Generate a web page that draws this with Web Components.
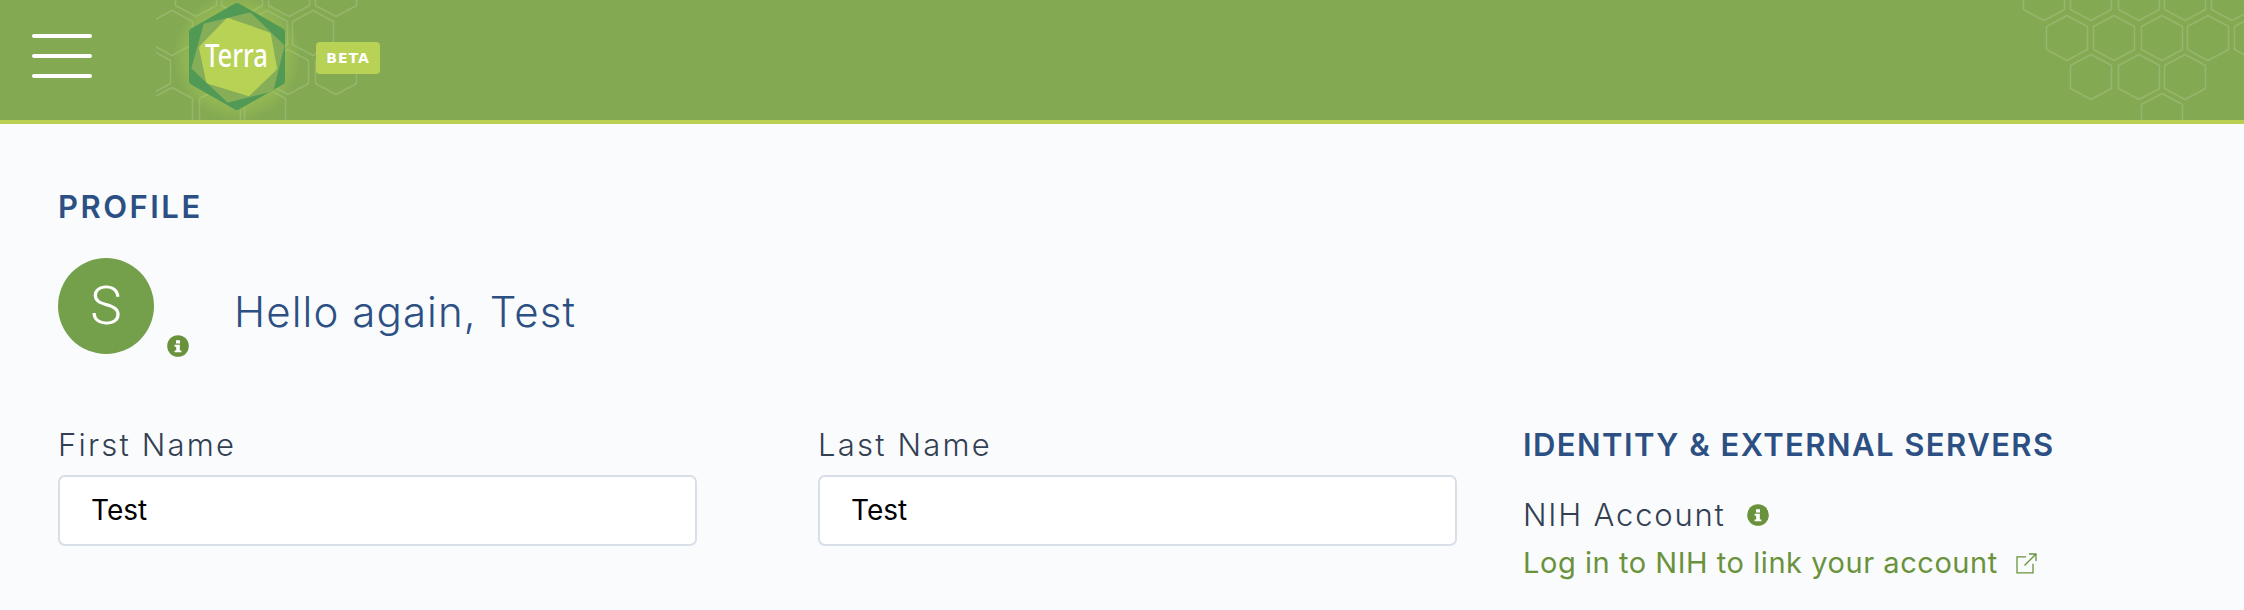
<!DOCTYPE html>
<html lang="en">
<head>
<meta charset="utf-8">
<title>Profile</title>
<style>
  html, body { margin: 0; padding: 0; background: #fafbfd; }
  body { width: 2244px; height: 610px; overflow: hidden; font-family: Inter, "Noto Sans", sans-serif; }
</style>
</head>
<body>
<terra-header></terra-header>
<profile-page>
  <section-title style="--track: 2.5px">PROFILE</section-title>
  <profile-hello slot="hello" initial="S">Hello again, Test</profile-hello>
  <text-field slot="first" label="First Name">Test</text-field>
  <text-field slot="last" label="Last Name">Test</text-field>
  <identity-panel slot="identity"></identity-panel>
</profile-page>

<script>
// petits hexagones du fond, [x, y] = centre
const HEX_CELLS = [
  [196,-6],[242,-6],[289,-6],[336,-6],[172,33],[267,33],[313,33],[150,72],[288,72],[336,72],[172,110],[220,110],[265,110],
  [2044,-2],[2091,-2],[2139,-2],[2185,-2],[2232,-2],[2067,38],[2114,38],[2162,38],[2208,38],[2255,38],
  [2091,77],[2139,77],[2185,77],[2162,116]
];

class HexField extends HTMLElement {
  constructor() {
    super();
    this.attachShadow({ mode: "open" });
  }
  connectedCallback() {
    const cells = HEX_CELLS.map(([x, y]) =>
      `<polygon points="${x},${y - 22.5} ${x + 20.5},${y - 11.5} ${x + 20.5},${y + 11.5} ${x},${y + 22.5} ${x - 20.5},${y + 11.5} ${x - 20.5},${y - 11.5}"/>`
    ).join("");
    this.shadowRoot.innerHTML = `
      <style>
        :host { position: absolute; inset: 0; display: block; pointer-events: none; }
        svg { display: block; }
        g { fill: none; stroke: #fff; stroke-opacity: .15; stroke-width: 1.5; stroke-linejoin: round; }
      </style>
      <svg width="2244" height="120" viewBox="0 0 2244 120">
        <defs>
          <radialGradient id="glow">
            <stop offset="0" stop-color="#b7d255" stop-opacity=".5"/>
            <stop offset=".75" stop-color="#b7d255" stop-opacity=".32"/>
            <stop offset="1" stop-color="#b7d255" stop-opacity="0"/>
          </radialGradient>
          <clipPath id="c"><rect x="156" y="0" width="2088" height="120"/></clipPath>
        </defs>
        <g clip-path="url(#c)">${cells}</g>
        <circle cx="237" cy="57" r="64" fill="url(#glow)"/>
      </svg>`;
  }
}
customElements.define("hex-field", HexField);

class TerraLogo extends HTMLElement {
  constructor() {
    super();
    this.attachShadow({ mode: "open" });
    this.shadowRoot.innerHTML = `
      <style>
        :host { display: block; width: 96px; height: 107px; }
        svg { display: block; overflow: visible; }
        text { font-family: "Noto Sans", sans-serif; font-size: 32px; font-weight: 500; fill: #fff; }
      </style>
      <svg width="96" height="107" viewBox="189 3 96 107">
        <polygon points="237,7 281,32 281,81 237,106 193,81 193,32" fill="#519a56" stroke="#519a56" stroke-width="8" stroke-linejoin="round"/>
        <polygon points="250,14 283,46 272,90 228,101 193,68 205,25" fill="#86ae58" stroke="#86ae58" stroke-width="3" stroke-linejoin="round"/>
        <polygon points="228,21 268,35 274,68 248,93 209,81 202,48" fill="#b7d255" stroke="#b7d255" stroke-width="6" stroke-linejoin="round"/>
        <text x="205" y="67" textLength="63" lengthAdjust="spacingAndGlyphs">Terra</text>
      </svg>`;
  }
}
customElements.define("terra-logo", TerraLogo);

class TerraHeader extends HTMLElement {
  constructor() {
    super();
    this.attachShadow({ mode: "open" });
    this.shadowRoot.innerHTML = `
      <style>
        :host { display: block; position: relative; height: 120px; background: #83aa53; border-bottom: 4px solid #b8d052; }
        .row { position: relative; display: flex; align-items: center; height: 120px; padding-left: 32px; }
        .burger { display: flex; flex-direction: column; gap: 16px; width: 60px; margin-top: -8px; }
        .burger i { display: block; height: 4px; background: #fff; border-radius: 2px; }
        terra-logo { margin-left: 97px; margin-top: -7px; }
        .beta {
          margin-left: 31px; margin-top: -4px; width: 64px; height: 32px; border-radius: 4px;
          background: #b7d255; color: #fff; font: 700 14px/32px "DejaVu Sans", sans-serif; letter-spacing: 1px; text-align: center;
        }
      </style>
      <hex-field></hex-field>
      <div class="row">
        <div class="burger"><i></i><i></i><i></i></div>
        <terra-logo></terra-logo>
        <div class="beta">BETA</div>
      </div>`;
  }
}
customElements.define("terra-header", TerraHeader);

class InfoIcon extends HTMLElement {
  constructor() {
    super();
    this.attachShadow({ mode: "open" });
    this.shadowRoot.innerHTML = `
      <style>
        :host { display: inline-block; width: 22px; height: 22px; }
        svg { display: block; }
      </style>
      <svg width="22" height="22" viewBox="0 0 22 22">
        <circle cx="11" cy="11" r="10.8" fill="#6a923d"/>
        <path d="M9 5.2h4v3.2H9z M7.6 9.8h5.2v5.6h1.6v1.9H7.6v-1.9h1.6v-3.7H7.6z" fill="#fff"/>
      </svg>`;
  }
}
customElements.define("info-icon", InfoIcon);

class SectionTitle extends HTMLElement {
  constructor() {
    super();
    this.attachShadow({ mode: "open" });
    this.shadowRoot.innerHTML = `
      <style>
        :host { display: block; color: #2c5083; font-family: Inter, "Noto Sans", sans-serif; font-weight: 600; font-size: 31px; line-height: 36px; white-space: nowrap; letter-spacing: var(--track, 1.45px); }
      </style>
      <slot></slot>`;
  }
}
customElements.define("section-title", SectionTitle);

class ProfileHello extends HTMLElement {
  constructor() {
    super();
    this.attachShadow({ mode: "open" });
  }
  connectedCallback() {
    const initial = this.getAttribute("initial") || "";
    this.shadowRoot.innerHTML = `
      <style>
        :host { display: flex; align-items: center; height: 96px; }
        .avatar {
          width: 96px; height: 96px; border-radius: 50%; background: #74a04b; color: #fff;
          display: flex; align-items: center; justify-content: center;
          font: 300 53px/1 Roboto, sans-serif; flex: none;
        }
        info-icon { align-self: flex-end; margin: 0 0 -3px 13px; flex: none; }
        .text { margin: 12px 0 0 45px; color: #2c5083; font: 300 42px/48px Inter, "Noto Sans", sans-serif; letter-spacing: 1.1px; white-space: nowrap; }
      </style>
      <div class="avatar">${initial}</div>
      <info-icon></info-icon>
      <div class="text"><slot></slot></div>`;
  }
}
customElements.define("profile-hello", ProfileHello);

class TextField extends HTMLElement {
  constructor() {
    super();
    this.attachShadow({ mode: "open" });
  }
  connectedCallback() {
    const label = this.getAttribute("label") || "";
    this.shadowRoot.innerHTML = `
      <style>
        :host { display: block; width: 639px; }
        .label { color: #333f52; font: 300 31px/36px Inter, "Noto Sans", sans-serif; letter-spacing: 2.2px; margin-bottom: 12px; }
        .box {
          box-sizing: border-box; height: 71px; padding: 0 31px; background: #fff;
          border: 2px solid #d8dfe9; border-radius: 7px; color: #000;
          font: 400 28px/67px Inter, "Noto Sans", sans-serif;
        }
      </style>
      <div class="label">${label}</div>
      <div class="box"><slot></slot></div>`;
  }
}
customElements.define("text-field", TextField);

class IdentityPanel extends HTMLElement {
  constructor() {
    super();
    this.attachShadow({ mode: "open" });
    this.shadowRoot.innerHTML = `
      <style>
        :host { display: block; }
        .nih { display: flex; align-items: center; margin-top: 32px; color: #333f52; font: 300 31px/40px Inter, "Noto Sans", sans-serif; letter-spacing: 1.8px; }
        .nih info-icon { margin-left: 21px; }
        .link { display: flex; align-items: center; margin-top: 10px; color: #6a923d; font: 400 29px/36px Inter, "Noto Sans", sans-serif; letter-spacing: .55px; white-space: nowrap; }
        .link svg { margin-left: 18px; flex: none; }
      </style>
      <section-title>IDENTITY &amp; EXTERNAL SERVERS</section-title>
      <div class="nih">NIH Account<info-icon></info-icon></div>
      <div class="link">Log in to NIH to link your account
        <svg width="21" height="21" viewBox="0 0 21 21" fill="none" stroke="#6a923d" stroke-width="1.3">
          <path d="M10 3.8H1v16h16v-9"/>
          <path d="M8.5 12.5 20 1M13 1h7v7"/>
        </svg>
      </div>`;
  }
}
customElements.define("identity-panel", IdentityPanel);

class ProfilePage extends HTMLElement {
  constructor() {
    super();
    this.attachShadow({ mode: "open" });
    this.shadowRoot.innerHTML = `
      <style>
        :host { display: block; padding: 65px 0 0 58px; }
        .hello { display: block; margin-top: 33px; }
        .columns { display: flex; margin-top: 73px; }
        .names { display: flex; gap: 121px; margin-right: 66px; }
      </style>
      <slot></slot>
      <div class="hello"><slot name="hello"></slot></div>
      <div class="columns">
        <div class="names"><slot name="first"></slot><slot name="last"></slot></div>
        <slot name="identity"></slot>
      </div>`;
  }
}
customElements.define("profile-page", ProfilePage);
</script>
</body>
</html>
